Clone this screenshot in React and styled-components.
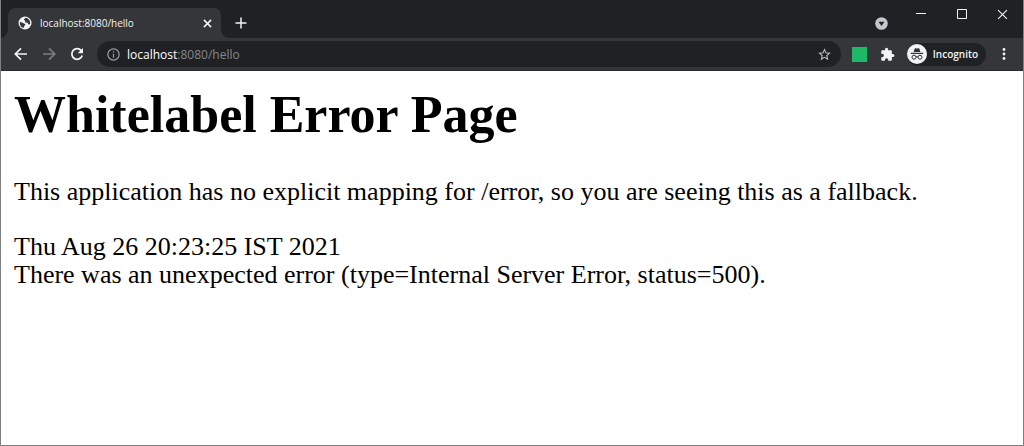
import React from "react";
import styled, { createGlobalStyle } from "styled-components";

const GlobalStyle = createGlobalStyle`
  *, *::before, *::after { box-sizing: border-box; }
  body { margin: 0; background: #fff; }
  button, input { font: inherit; border: 0; padding: 0; background: none; color: inherit; }
  svg { display: block; }
`;

const uiFont = `"Open Sans", "Noto Sans", sans-serif`;

const Window = styled.div`
  display: flex;
  flex-direction: column;
  min-height: 100vh;
  border: 1px solid #808080;
  border-top: 0;
  background: #fff;
`;

const TitleBar = styled.header`
  display: flex;
  height: 38px;
  padding-left: 7px;
  background: #202124;
  color: #dee1e6;
  font-family: ${uiFont};
`;

const Tab = styled.div`
  position: relative;
  display: flex;
  align-items: center;
  gap: 8px;
  width: 213px;
  margin-top: 8px;
  padding: 0 7px 0 10px;
  border-radius: 7px 7px 0 0;
  background: #35363a;
  color: #f1f3f4;
  font-size: 10px;
  font-weight: 500;

  &::before, &::after {
    content: "";
    position: absolute;
    bottom: 0;
    width: 7px;
    height: 7px;
  }
  &::before {
    right: 100%;
    background: radial-gradient(circle at 0 0, transparent 6px, #35363a 7px);
  }
  &::after {
    left: 100%;
    background: radial-gradient(circle at 100% 0, transparent 6px, #35363a 7px);
  }
`;

const TabTitle = styled.span`
  flex: 1;
  white-space: nowrap;
`;

const IconButton = styled.button`
  display: grid;
  place-items: center;
  flex: none;
  width: ${(p) => p.$width || 28}px;
  height: ${(p) => p.$height || 28}px;
  color: ${(p) => p.$color || "#f1f3f4"};
`;

const NewTab = styled(IconButton)`
  margin: 9px 0 0 6px;
`;

const WindowControls = styled.div`
  display: flex;
  margin-left: auto;
`;

const TabSearch = styled(IconButton)`
  margin: 9px 6px 0 0;
`;

const Toolbar = styled.nav`
  display: flex;
  align-items: center;
  height: 33px;
  padding: 0 5px 0 6px;
  border-bottom: 1px solid #28292c;
  background: #35363a;
  color: #f1f3f4;
  font-family: ${uiFont};
`;

const AddressBar = styled.div`
  display: flex;
  flex: 1;
  align-items: center;
  min-width: 0;
  height: 26px;
  margin: 0 5px 0 6px;
  padding: 0 2px;
  border-radius: 13px;
  background: #202124;
`;

const Address = styled.a`
  flex: 1;
  overflow: hidden;
  color: #85888c;
  font-size: 12px;
  white-space: nowrap;
  text-decoration: none;
`;

const Host = styled.span`
  color: #fff;
`;

const Extension = styled.span`
  width: 15px;
  height: 15px;
  background: #1db966;
`;

const Profile = styled.button`
  display: flex;
  align-items: center;
  gap: 6px;
  height: 23px;
  margin: 0 4px 0 5px;
  padding-right: 8px;
  border-radius: 12px;
  background: #202124;
  color: #f1f3f4;
  font-size: 10px;
  font-weight: 600;
`;

const Page = styled.main`
  flex: 1;
  padding: 0 13px;
  color: #000;
  font-family: "Liberation Serif", "Times New Roman", serif;
  font-size: 26px;
  line-height: 28px;
`;

const Heading = styled.h1`
  margin: 14px 0 33px;
  font-size: 52px;
  line-height: 60px;
`;

const Message = styled.p`
  margin: 0 0 27px;
`;

const Line = styled.div``;

const GlobeIcon = () => (
  <svg width="14" height="14" viewBox="0 0 14 14">
    <circle cx="7" cy="7" r="6.5" fill="#f1f3f4" />
    <path d="M1.8 5.9c1.600.2 2.900.5 3.600 1.300.5.6 1.700.3 1.900 1.100.2.9-.8 1-1 1.700-.2.7-.3 1.500-1.100 2C2.900 11.200 1.500 8.700 1.800 5.900Z" fill="#35363a" />
    <path d="M7.400 1.800c-.2 1-1.500.8-1.400 1.800.1.800 1 .6 1.200 1.300.2.600-.5.900.1 1.500.8.700 1.400-.2 2.200.4.600.5.400 1.400 1.200 1.600.6.100.9-.3 1.400-.5C12.500 4.700 10.500 2 7.400 1.800Z" fill="#35363a" />
  </svg>
);

const CloseIcon = ({ size, stroke }) => (
  <svg width={size} height={size} viewBox="0 0 10 10" fill="none" stroke="currentColor" strokeWidth={stroke}>
    <path d="M1 1l8 8M9 1l-8 8" />
  </svg>
);

const PlusIcon = () => (
  <svg width="12" height="12" viewBox="0 0 12 12" stroke="currentColor" strokeWidth="1.500">
    <path d="M6 .5v11M.5 6h11" />
  </svg>
);

const CaretCircleIcon = () => (
  <svg width="13" height="13" viewBox="0 0 13 13">
    <circle cx="6.500" cy="6.500" r="6.300" fill="#c4c7cb" />
    <path d="M3.500 4.800h6L6.500 9Z" fill="#202124" />
  </svg>
);

const MinimizeIcon = () => (
  <svg width="10" height="10" viewBox="0 0 10 10" stroke="currentColor">
    <path d="M0 4.500h10" />
  </svg>
);

const MaximizeIcon = () => (
  <svg width="10" height="10" viewBox="0 0 10 10" fill="none" stroke="currentColor">
    <path d="M.5.5h9v9h-9Z" />
  </svg>
);

const ArrowIcon = ({ forward }) => (
  <svg width="14" height="14" viewBox="0 0 14 14" fill="none" stroke="currentColor" strokeWidth="1.700">
    <path d={forward ? "M1 7h11M7 1.300 12.700 7 7 12.700" : "M13 7H2M7 1.300 1.300 7 7 12.700"} />
  </svg>
);

const ReloadIcon = () => (
  <svg width="14" height="14" viewBox="0 0 14 14">
    <path d="M11.300 3.700A5.300 5.300 0 1 0 12.200 8.500" fill="none" stroke="currentColor" strokeWidth="1.800" />
    <path d="M13 .9v5.400H7.600Z" fill="currentColor" />
  </svg>
);

const InfoIcon = () => (
  <svg width="13" height="13" viewBox="0 0 13 13" fill="none" stroke="currentColor" strokeWidth="1.200">
    <circle cx="6.500" cy="6.500" r="5.600" />
    <path d="M6.500 5.700v4M6.500 3.200v1.400" />
  </svg>
);

const StarIcon = () => (
  <svg width="15" height="15" viewBox="0 0 24 24" fill="currentColor">
    <path d="M22 9.240l-7.190-.62L12 2 9.190 8.630 2 9.240l5.460 4.730L5.820 21 12 17.270 18.180 21l-1.630-7.030L22 9.240zM12 15.400l-3.760 2.270 1-4.280-3.320-2.880 4.380-.38L12 6.100l1.710 4.040 4.380.38-3.320 2.880 1 4.280L12 15.400z" />
  </svg>
);

const PuzzleIcon = () => (
  <svg width="15" height="15" viewBox="0 0 24 24" fill="currentColor">
    <path d="M20.500 11H19V7c0-1.100-.9-2-2-2h-4V3.500a2.500 2.500 0 0 0-5 0V5H4c-1.100 0-1.990.9-1.990 2v3.800H3.500a2.700 2.700 0 0 1 0 5.400H2V20c0 1.100.9 2 2 2h3.800v-1.500a2.700 2.700 0 0 1 5.400 0V22H17c1.100 0 2-.9 2-2v-4h1.500a2.500 2.500 0 0 0 0-5z" />
  </svg>
);

const IncognitoIcon = () => (
  <svg width="20" height="20" viewBox="0 0 20 20">
    <circle cx="10" cy="10" r="10" fill="#f1f3f4" />
    <path d="M6.600 7.900 7.700 4.600q.2-.5.8-.4l1.500.4 1.500-.4q.6-.1.8.4l1.100 3.300Z" fill="#303134" />
    <path d="M3.800 9.400h12.400" stroke="#303134" strokeWidth="1.200" />
    <g fill="none" stroke="#303134">
      <circle cx="7" cy="13.200" r="2" />
      <circle cx="13" cy="13.200" r="2" />
      <path d="M9 13q1-.7 2 0" />
    </g>
  </svg>
);

const MenuIcon = () => (
  <svg width="4" height="14" viewBox="0 0 4 14" fill="currentColor">
    <circle cx="2" cy="2.500" r="1.400" />
    <circle cx="2" cy="7" r="1.400" />
    <circle cx="2" cy="11.500" r="1.400" />
  </svg>
);

export default function App() {
  return (
    <>
      <GlobalStyle />
      <Window>
        <TitleBar>
          <Tab>
            <GlobeIcon />
            <TabTitle>localhost:8080/hello</TabTitle>
            <IconButton $width={14} $height={14} aria-label="Close tab">
              <CloseIcon size={9} stroke={1.7} />
            </IconButton>
          </Tab>
          <NewTab aria-label="New tab"><PlusIcon /></NewTab>
          <WindowControls>
            <TabSearch aria-label="Search tabs"><CaretCircleIcon /></TabSearch>
            <IconButton $width={40} aria-label="Minimize"><MinimizeIcon /></IconButton>
            <IconButton $width={41} aria-label="Maximize"><MaximizeIcon /></IconButton>
            <IconButton $width={41} aria-label="Close window"><CloseIcon size={11} stroke={1} /></IconButton>
          </WindowControls>
        </TitleBar>
        <Toolbar aria-label="Browser toolbar">
          <IconButton aria-label="Back"><ArrowIcon /></IconButton>
          <IconButton $color="#7c7e82" aria-label="Forward"><ArrowIcon forward /></IconButton>
          <IconButton aria-label="Reload"><ReloadIcon /></IconButton>
          <AddressBar>
            <IconButton $color="#9aa0a6" aria-label="Site information"><InfoIcon /></IconButton>
            <Address href="/hello"><Host>localhost</Host>:8080/hello</Address>
            <IconButton $color="#c4c7cb" aria-label="Bookmark this page"><StarIcon /></IconButton>
          </AddressBar>
          <IconButton aria-label="Extension"><Extension /></IconButton>
          <IconButton aria-label="Extensions"><PuzzleIcon /></IconButton>
          <Profile><IncognitoIcon />Incognito</Profile>
          <IconButton aria-label="Menu"><MenuIcon /></IconButton>
        </Toolbar>
        <Page>
          <Heading>Whitelabel Error Page</Heading>
          <Message>This application has no explicit mapping for /error, so you are seeing this as a fallback.</Message>
          <Line>Thu Aug 26 20:23:25 IST 2021</Line>
          <Line>There was an unexpected error (type=Internal Server Error, status=500).</Line>
        </Page>
      </Window>
    </>
  );
}
